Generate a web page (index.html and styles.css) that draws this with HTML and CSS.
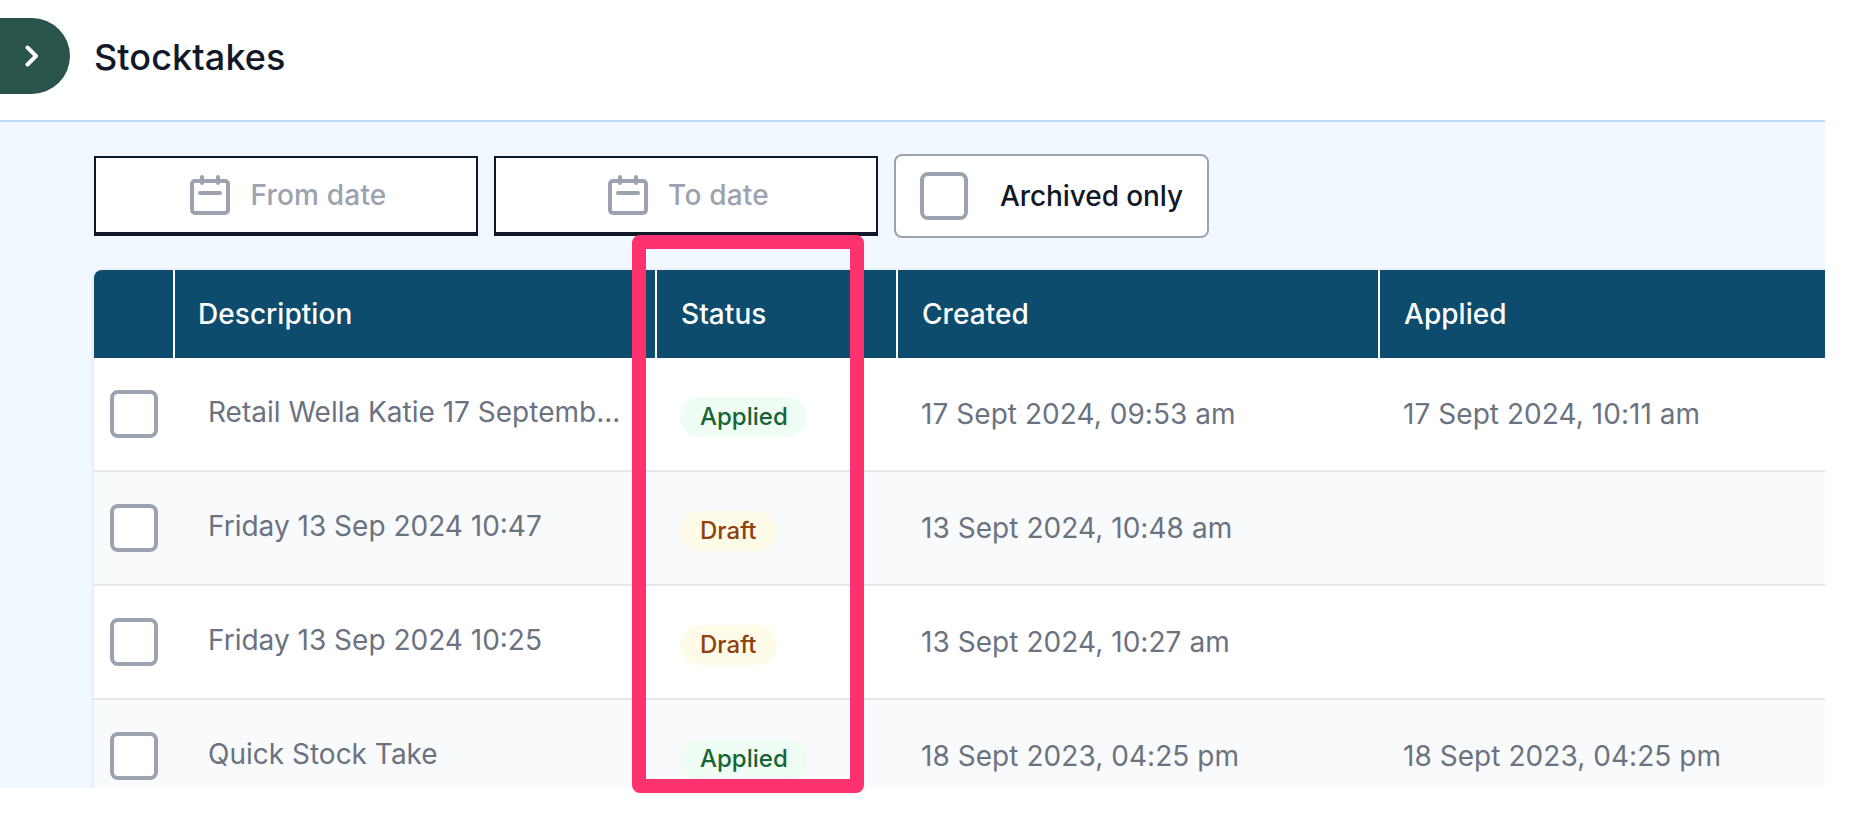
FILE: index.html
```html
<!DOCTYPE html>
<html lang="en">
<head>
<meta charset="utf-8">
<title>Stocktakes</title>
<link rel="stylesheet" href="styles.css">
</head>
<body>
<div class="app">
  <header class="topbar">
    <button class="toggle" type="button" aria-label="Open menu">
      <svg class="chevron" viewBox="0 0 14 22" width="14" height="22"><polyline points="2.5,2.5 11,11 2.5,19.5"/></svg>
    </button>
    <h1 class="title">Stocktakes</h1>
  </header>
  <main class="panel">
    <div class="filters">
      <div class="date-input">
        <svg class="cal" viewBox="0 0 40 40" width="40" height="40"><rect x="2" y="6" width="36" height="32" rx="3"/><path d="M12 2v6M28 2v6M10 18h20"/></svg>
        <span>From date</span>
      </div>
      <div class="date-input">
        <svg class="cal" viewBox="0 0 40 40" width="40" height="40"><rect x="2" y="6" width="36" height="32" rx="3"/><path d="M12 2v6M28 2v6M10 18h20"/></svg>
        <span>To date</span>
      </div>
      <label class="archived"><span class="check"></span><span>Archived only</span></label>
    </div>
    <table class="grid">
      <colgroup><col class="c1"><col class="c2"><col class="c3"><col class="c4"><col class="c5"></colgroup>
      <thead>
        <tr><th></th><th>Description</th><th>Status</th><th>Created</th><th>Applied</th></tr>
      </thead>
      <tbody>
        <tr>
          <td class="sel"><span class="check"></span></td>
          <td class="desc">Retail Wella Katie 17 Septemb...</td>
          <td class="stat"><span class="badge ok">Applied</span></td>
          <td class="date">17 Sept 2024, 09:53 am</td>
          <td class="date">17 Sept 2024, 10:11 am</td>
        </tr>
        <tr>
          <td class="sel"><span class="check"></span></td>
          <td class="desc">Friday 13 Sep 2024 10:47</td>
          <td class="stat"><span class="badge draft">Draft</span></td>
          <td class="date">13 Sept 2024, 10:48 am</td>
          <td class="date"></td>
        </tr>
        <tr>
          <td class="sel"><span class="check"></span></td>
          <td class="desc">Friday 13 Sep 2024 10:25</td>
          <td class="stat"><span class="badge draft">Draft</span></td>
          <td class="date">13 Sept 2024, 10:27 am</td>
          <td class="date"></td>
        </tr>
        <tr>
          <td class="sel"><span class="check"></span></td>
          <td class="desc">Quick Stock Take</td>
          <td class="stat"><span class="badge ok">Applied</span></td>
          <td class="date">18 Sept 2023, 04:25 pm</td>
          <td class="date">18 Sept 2023, 04:25 pm</td>
        </tr>
      </tbody>
    </table>
  </main>
  <div class="highlight"></div>
</div>
</body>
</html>
```

FILE: styles.css
```css
* { box-sizing: border-box; }
html, body { margin: 0; padding: 0; background: #fff; }
body { font-family: Inter, "Liberation Sans", sans-serif; overflow: hidden; }

.app { position: relative; width: 1825px; height: 834px; }

.topbar {
  display: flex;
  align-items: flex-start;
  gap: 24px;
  height: 122px;
  padding-top: 18px;
  border-bottom: 2px solid #bfdbfe;
  background: #fff;
}
.toggle {
  display: flex;
  align-items: center;
  justify-content: flex-start;
  width: 70px;
  height: 76px;
  padding: 0 0 0 25px;
  border: 0;
  border-radius: 0 38px 38px 0;
  background: #28544c;
}
.chevron { fill: none; stroke: #fff; stroke-width: 4; stroke-linecap: round; stroke-linejoin: round; }
.title {
  margin: 17px 0 0;
  font-size: 36px;
  line-height: 44px;
  font-weight: 500;
  letter-spacing: 0.1px;
  color: #111827;
}

.panel { height: 666px; padding: 32px 0 0 94px; background: #f1f8ff; overflow: hidden; }

.filters { display: flex; align-items: flex-start; gap: 16px; height: 84px; }
.date-input {
  display: flex;
  align-items: center;
  justify-content: center;
  gap: 20px;
  width: 384px;
  height: 80px;
  margin-top: 2px;
  padding-left: 5px;
  border: solid #111827;
  border-width: 2px 2px 4px;
  background: #fff;
  font-size: 28px;
  font-weight: 500;
  letter-spacing: 0.2px;
  color: #9ca3af;
}
.cal { fill: none; stroke: #9ca3af; stroke-width: 4; stroke-linecap: round; stroke-linejoin: round; }
.archived {
  display: flex;
  align-items: center;
  gap: 32px;
  width: 315px;
  height: 84px;
  padding-left: 24px;
  border: 2px solid #9ca3af;
  border-radius: 8px;
  background: #fff;
  font-size: 28px;
  font-weight: 500;
  letter-spacing: -0.08px;
  color: #111827;
}
.check {
  display: block;
  flex: none;
  width: 48px;
  height: 48px;
  border: 4px solid #9ca3af;
  border-radius: 8px;
  background: #fff;
}

.grid {
  table-layout: fixed;
  width: 1731px;
  margin-top: 32px;
  border-collapse: separate;
  border-spacing: 0;
  background: #fff;
  box-shadow: 0 1px 4px rgba(17, 24, 39, 0.12);
  border-radius: 8px 0 0 0;
}
.c1 { width: 81px; }
.c2 { width: 482px; }
.c3 { width: 241px; }
.c4 { width: 482px; }
.c5 { width: 445px; }

th {
  height: 88px;
  padding: 0 0 0 24px;
  background: #0e4c6e;
  border-right: 2px solid #fff;
  text-align: left;
  font-size: 28px;
  font-weight: 550;
  letter-spacing: 0.05px;
  color: #fff;
}
th:first-child { border-top-left-radius: 8px; }
th:nth-child(2) { padding-left: 23px; }
th:last-child { border-right: 0; }

td {
  height: 114px;
  padding: 0;
  vertical-align: top;
  border-bottom: 2px solid #e5e7eb;
  font-size: 28px;
  line-height: 40px;
  letter-spacing: 0.05px;
  color: #6b7280;
  white-space: nowrap;
}
tbody tr:nth-child(even) td { background: #f9fafb; }
.sel { padding: 32px 0 0 16px; }
.desc { padding: 34px 0 0 33px; letter-spacing: 0; }
.stat { padding: 39px 0 0 23px; }
.date { padding: 36px 0 0 23px; }

.badge {
  display: inline-block;
  height: 40px;
  padding: 0 20px;
  border-radius: 20px;
  font-size: 24px;
  font-weight: 500;
  line-height: 40px;
  letter-spacing: 0;
  vertical-align: top;
}
.ok { background: #f0fdf4; color: #166534; padding-right: 19px; }
.draft { background: #fefce8; color: #92400e; }

.highlight {
  position: absolute;
  left: 632px;
  top: 235px;
  width: 232px;
  height: 558px;
  border: 14px solid #ff3270;
  border-radius: 8px;
}
```
